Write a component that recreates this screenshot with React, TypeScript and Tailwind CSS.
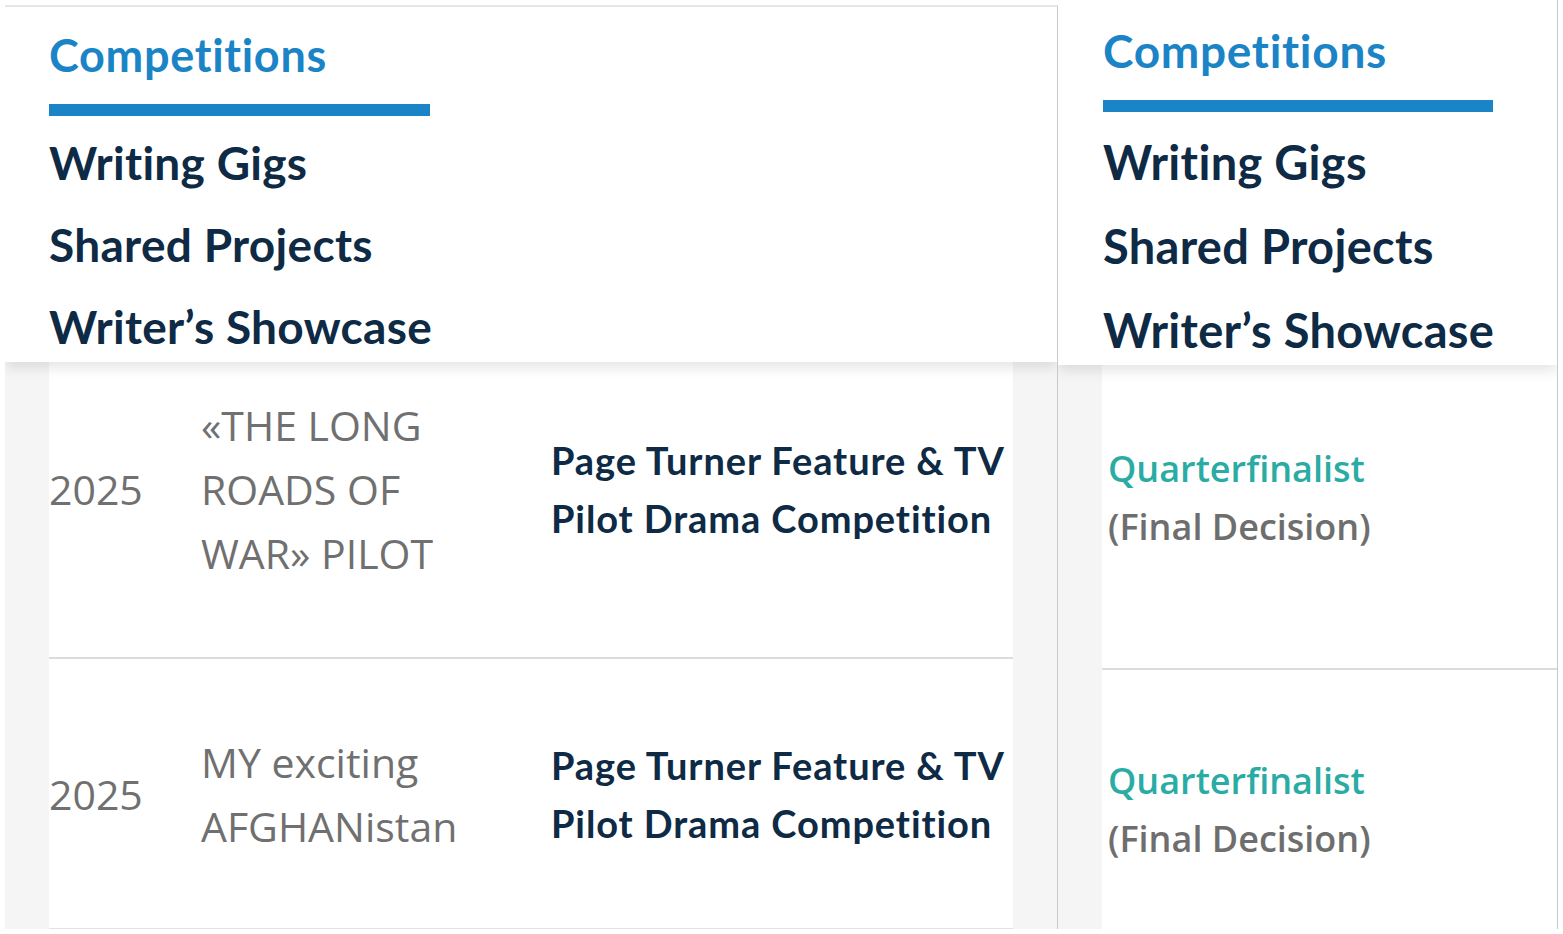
import React from "react";

const heading = { fontFamily: "Lato, 'Noto Sans', sans-serif" };
const body = { fontFamily: "'Open Sans', 'Noto Sans', sans-serif" };

function LeftPanel() {
  return (
    <div className="mt-[5px] ml-[5px] flex h-[924px] w-[1053px] flex-col overflow-hidden border-r border-[#c9c9c9] border-t-2 border-t-[#e6e6e6] bg-[#f5f5f5]">
      <nav
        className="relative z-10 flex h-[355px] shrink-0 flex-col overflow-hidden bg-white pl-[44px] pt-[20px] shadow-[0_6px_12px_rgba(0,0,0,0.10)]"
        style={heading}
      >
        <div className="h-[56px] shrink-0 text-[45px] font-bold leading-[56px] tracking-[0.7px] text-[#1b84c6]">Competitions</div>
        <div className="mt-[21px] h-[12px] w-[381px] shrink-0 bg-[#1b84c6]" />
        <div className="mt-[6px] flex shrink-0 flex-col text-[46px] font-bold leading-[82px] tracking-[0.3px] text-[#0e2a45]">
          <span>Writing Gigs</span>
          <span>Shared Projects</span>
          <span>Writer’s Showcase</span>
        </div>
      </nav>
      <div className="mx-[44px] flex shrink-0 flex-col bg-white">
        <div className="flex h-[295px] shrink-0 items-center pb-[42px]">
          <div className="w-[152px] text-[41px] leading-[64px] text-[#707070]" style={body}>2025</div>
          <div className="w-[350px] text-[41px] leading-[64px] text-[#707070]" style={body}>
            «THE LONG<br />ROADS OF<br />WAR» PILOT
          </div>
          <div className="w-[462px] text-[38px] font-bold leading-[58px] tracking-[0.9px] text-[#0e2a45]" style={heading}>
            Page Turner Feature &amp; TV<br />Pilot Drama Competition
          </div>
        </div>
        <div className="flex h-[271px] shrink-0 items-center border-t-2 border-[#dcdcdc]">
          <div className="w-[152px] text-[41px] leading-[64px] text-[#707070]" style={body}>2025</div>
          <div className="w-[350px] text-[41px] leading-[64px] text-[#707070]" style={body}>
            MY exciting<br />AFGHANistan
          </div>
          <div className="w-[462px] text-[38px] font-bold leading-[58px] tracking-[0.9px] text-[#0e2a45]" style={heading}>
            Page Turner Feature &amp; TV<br />Pilot Drama Competition
          </div>
        </div>
        <div className="h-px shrink-0 bg-[#e2e2e2]" />
      </div>
    </div>
  );
}

function RightPanel() {
  return (
    <div className="flex h-[929px] w-[500px] flex-col overflow-hidden border-r border-[#c9c9c9] bg-[#f5f5f5]">
      <nav
        className="relative z-10 flex h-[365px] shrink-0 flex-col overflow-hidden bg-white pl-[45px] pt-[23px] shadow-[0_6px_12px_rgba(0,0,0,0.10)]"
        style={heading}
      >
        <div className="h-[56px] shrink-0 text-[46px] font-bold leading-[56px] tracking-[0.7px] text-[#1b84c6]">Competitions</div>
        <div className="mt-[21px] h-[12px] w-[390px] shrink-0 bg-[#1b84c6]" />
        <div className="mt-[8px] flex shrink-0 flex-col text-[47px] font-bold leading-[84px] tracking-[0.3px] text-[#0e2a45]">
          <span>Writing Gigs</span>
          <span>Shared Projects</span>
          <span>Writer’s Showcase</span>
        </div>
      </nav>
      <div className="ml-[44px] flex shrink-0 flex-col bg-white">
        <div className="flex h-[303px] shrink-0 items-center pb-[37px] pl-[6px]">
          <div className="text-[36px] font-semibold leading-[58px]" style={body}>
            <div className="text-[#2aaca4]">Quarterfinalist</div>
            <div className="text-[#6e6e6e]">(Final Decision)</div>
          </div>
        </div>
        <div className="flex h-[282px] shrink-0 items-center border-t-2 border-[#dcdcdc] pl-[6px]">
          <div className="text-[36px] font-semibold leading-[58px]" style={body}>
            <div className="text-[#2aaca4]">Quarterfinalist</div>
            <div className="text-[#6e6e6e]">(Final Decision)</div>
          </div>
        </div>
      </div>
    </div>
  );
}

export default function App() {
  return (
    <div className="flex h-[934px] w-[1563px] items-start overflow-hidden bg-white">
      <LeftPanel />
      <RightPanel />
    </div>
  );
}
